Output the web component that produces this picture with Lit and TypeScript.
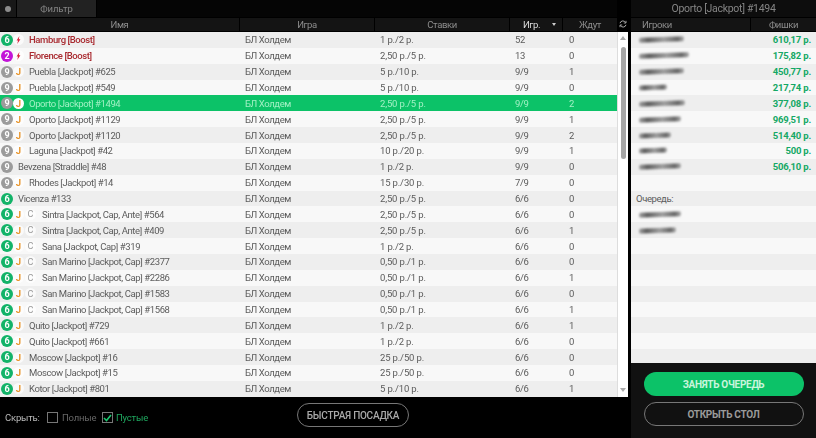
import { LitElement, html, css, svg } from "lit";
import { customElement } from "lit/decorators.js";
import { classMap } from "lit/directives/class-map.js";

type Row = { seats: string; tag: string; cap?: boolean; name: string; stakes: string; players: string; wait: string };
const rows: Row[] = [
  { seats: "6", tag: "b", name: "Hamburg [Boost]", stakes: "1 р./2 р.", players: "52", wait: "0" },
  { seats: "2", tag: "b", name: "Florence [Boost]", stakes: "2,50 р./5 р.", players: "13", wait: "0" },
  { seats: "9", tag: "J", name: "Puebla [Jackpot] #625", stakes: "5 р./10 р.", players: "9/9", wait: "1" },
  { seats: "9", tag: "J", name: "Puebla [Jackpot] #549", stakes: "5 р./10 р.", players: "9/9", wait: "0" },
  { seats: "9", tag: "J", name: "Oporto [Jackpot] #1494", stakes: "2,50 р./5 р.", players: "9/9", wait: "2" },
  { seats: "9", tag: "J", name: "Oporto [Jackpot] #1129", stakes: "2,50 р./5 р.", players: "9/9", wait: "1" },
  { seats: "9", tag: "J", name: "Oporto [Jackpot] #1120", stakes: "2,50 р./5 р.", players: "9/9", wait: "2" },
  { seats: "9", tag: "J", name: "Laguna [Jackpot] #42", stakes: "10 р./20 р.", players: "9/9", wait: "1" },
  { seats: "9", tag: "", name: "Bevzena [Straddle] #48", stakes: "1 р./2 р.", players: "9/9", wait: "0" },
  { seats: "9", tag: "J", name: "Rhodes [Jackpot] #14", stakes: "15 р./30 р.", players: "7/9", wait: "0" },
  { seats: "6", tag: "", name: "Vicenza #133", stakes: "2,50 р./5 р.", players: "6/6", wait: "0" },
  { seats: "6", tag: "J", cap: true, name: "Sintra [Jackpot, Cap, Ante] #564", stakes: "2,50 р./5 р.", players: "6/6", wait: "0" },
  { seats: "6", tag: "J", cap: true, name: "Sintra [Jackpot, Cap, Ante] #409", stakes: "2,50 р./5 р.", players: "6/6", wait: "1" },
  { seats: "6", tag: "J", cap: true, name: "Sana [Jackpot, Cap] #319", stakes: "1 р./2 р.", players: "6/6", wait: "0" },
  { seats: "6", tag: "J", cap: true, name: "San Marino [Jackpot, Cap] #2377", stakes: "0,50 р./1 р.", players: "6/6", wait: "0" },
  { seats: "6", tag: "J", cap: true, name: "San Marino [Jackpot, Cap] #2286", stakes: "0,50 р./1 р.", players: "6/6", wait: "1" },
  { seats: "6", tag: "J", cap: true, name: "San Marino [Jackpot, Cap] #1583", stakes: "0,50 р./1 р.", players: "6/6", wait: "0" },
  { seats: "6", tag: "J", cap: true, name: "San Marino [Jackpot, Cap] #1568", stakes: "0,50 р./1 р.", players: "6/6", wait: "1" },
  { seats: "6", tag: "J", name: "Quito [Jackpot] #729", stakes: "1 р./2 р.", players: "6/6", wait: "1" },
  { seats: "6", tag: "J", name: "Quito [Jackpot] #661", stakes: "1 р./2 р.", players: "6/6", wait: "0" },
  { seats: "6", tag: "J", name: "Moscow [Jackpot] #16", stakes: "25 р./50 р.", players: "6/6", wait: "0" },
  { seats: "6", tag: "J", name: "Moscow [Jackpot] #15", stakes: "25 р./50 р.", players: "6/6", wait: "0" },
  { seats: "6", tag: "J", name: "Kotor [Jackpot] #801", stakes: "5 р./10 р.", players: "6/6", wait: "1" },
];
const chips: [number, string][] = [
  [45, "610,17 р."], [50, "175,82 р."], [45, "450,77 р."], [28, "217,74 р."], [46, "377,08 р."],
  [42, "969,51 р."], [32, "514,40 р."], [28, "500 р."], [42, "506,10 р."],
];
const queue = [42, 37];
const bolt = svg`<svg class="bolt" viewBox="0 0 5 8" width="5" height="8"><path d="M3.4 0 .6 4.4h1.5L1.2 8l3.2-4.8H2.8z" fill="#d8203a"/></svg>`;

@customElement("app-root")
export class AppRoot extends LitElement {
  static styles = css`
    :host { display: block; width: 816px; height: 438px; background: #000; overflow: hidden; font-family: Roboto, "Noto Sans", sans-serif; font-size: 9.5px; color: #5c5c5c; letter-spacing: -.4px; }
    .page { display: grid; grid-template-columns: 617px 14px 185px; height: 438px; filter: blur(.25px); }
    .left { grid-column: 1; display: flex; flex-direction: column; min-width: 0; }
    .tabs { height: 17px; display: flex; background: #050505; }
    .dot-tab { width: 16px; display: flex; align-items: center; justify-content: center; background: #181818; }
    .dot { width: 6px; height: 6px; border-radius: 50%; background: #8c8c8c; }
    .tab { width: 81px; background: #222; color: #858585; display: flex; align-items: center; justify-content: center; box-sizing: border-box; border-right: 1px solid #000; border-left: 1px solid #000; letter-spacing: -.1px; }
    .head { height: 14px; margin-top: 1px; display: grid; background: #141414; color: #8d8d8d; grid-template-columns: 240px 135px 135px 53px 54px; box-sizing: border-box; border-bottom: 1px solid #000; align-items: center; }
    .head > div { text-align: center; border-right: 1px solid #000; line-height: 13px; position: relative; }
    .head > div:last-child { border-right: 0; }
    .head .sort { color: #ddd; padding-right: 9px; box-sizing: border-box; }
    .sort i { position: absolute; right: 6px; top: 5px; border: 2px solid transparent; border-top: 3px solid #ccc; border-bottom: 0; }
    .list { height: 365px; display: grid; grid-auto-rows: calc(365px / 23); }
    .row { display: grid; grid-template-columns: 240px 135px 135px 54px 53px; align-items: center; background: #f8f8f8; }
    .row:nth-child(odd) { background: #eeeeee; }
    .row.sel { background: #0cc268; color: #a2f0c4; }
    .row > div { white-space: nowrap; padding-left: 5px; }
    .row .c-name { padding-left: 1px; display: flex; align-items: center; }
    .row .c-stakes { letter-spacing: -.15px; }
    .seat { width: 12px; height: 12px; border-radius: 50%; color: #fff; font-size: 9px; font-weight: 700; display: flex; align-items: center; justify-content: center; letter-spacing: 0; flex: none; }
    .s6 { background: #12b368; }
    .s2 { background: #c314d8; }
    .s9 { background: #9b9b9b; }
    .ic { width: 11px; height: 11px; border-radius: 50%; display: flex; align-items: center; justify-content: center; font-size: 9.5px; font-weight: 700; color: #e8962e; flex: none; letter-spacing: 0; background: rgba(255, 255, 255, .7); }
    .ic.cap { color: #999; font-weight: 400; font-size: 9px; margin-left: 1px; }
    .sel .ic { background: #fff; }
    .nm { margin-left: 5px; }
    .nm.capped { margin-left: 6px; }
    .nm.boost { color: #a92a30; font-weight: 500; }
    .sel .nm { color: #a2f0c4; }
    .bottom { flex: 1; display: flex; align-items: center; position: relative; padding: 0 0 0 5px; color: #999; letter-spacing: -.2px; }
    .chk { width: 9px; height: 9px; border: 1px solid #777; margin-right: 4px; display: flex; align-items: center; justify-content: center; flex: none; }
    .hide { width: 42px; color: #bbb; }
    .full { width: 40px; color: #666; }
    .empty { color: #1fa85f; margin-left: -1px; }
    .quick { position: absolute; left: 297px; top: 6px; width: 112px; height: 24px; box-sizing: border-box; border: 1px solid #777; border-radius: 12px; color: #aaa; font-weight: 500; display: flex; align-items: center; justify-content: center; font-size: 10px; letter-spacing: -.25px; }
    .side { grid-column: 2; display: flex; flex-direction: column; }
    .refresh { height: 32px; display: flex; align-items: flex-end; justify-content: center; padding: 0 3px 4px 0; box-sizing: border-box; }
    .track { width: 11px; height: 365px; background: #fff; display: flex; flex-direction: column; align-items: center; position: relative; border-left: 1px solid #ddd; box-sizing: border-box; }
    .arrow { height: 12px; display: flex; align-items: center; justify-content: center; }
    .arrow i { border: 3px solid transparent; border-bottom: 4px solid #aaa; border-top: 0; }
    .arrow.down { position: absolute; bottom: 1px; }
    .arrow.down i { border-bottom: 0; border-top: 4px solid #aaa; }
    .thumb { width: 5px; height: 112px; border-radius: 3px; background: #a5a5a5; margin-top: 3px; }
    .right { grid-column: 3; display: flex; flex-direction: column; }
    .title { height: 17px; text-align: center; line-height: 18px; color: #858585; font-size: 10.5px; letter-spacing: -.3px; background: #0d0d0d; }
    .rhead { height: 14px; margin-top: 1px; display: grid; grid-template-columns: 120px 65px; background: #141414; color: #8d8d8d; align-items: center; box-sizing: border-box; border-bottom: 1px solid #000; }
    .rhead > div { line-height: 13px; }
    .rhead .pl { padding-left: 11px; border-right: 1px solid #000; }
    .rhead .ch { text-align: center; }
    .rlist { height: 331px; display: grid; grid-auto-rows: calc(365px / 23); background: #f8f8f8; overflow: hidden; }
    .pr { display: flex; align-items: center; justify-content: space-between; padding: 0 5px 0 8px; background: #f8f8f8; min-width: 0; }
    .pr:nth-child(odd) { background: #eeeeee; }
    .blur { height: 5px; border-radius: 2px; background: linear-gradient(90deg, #a0a0a0, #5e5e5e 20%, #a0a0a0 55%, #666 85%, #aaa); filter: blur(1.3px); transform: skewY(-2deg); }
    .amt { color: #14a865; font-weight: 700; letter-spacing: -.2px; }
    .q { padding-left: 5px; }
    .actions { flex: 1; display: flex; flex-direction: column; align-items: center; gap: 6px; padding-top: 9px; background: #111; }
    .btn { width: 160px; height: 24px; border-radius: 12px; box-sizing: border-box; display: flex; align-items: center; justify-content: center; font-weight: 700; font-size: 10px; letter-spacing: -.3px; }
    .btn.g { background: #0cc268; color: #c8f5dc; }
    .btn.o { border: 1px solid #777; color: #9a9a9a; }
  `;

  private rowTpl(r: Row, i: number) {
    return html`<div class=${classMap({ row: true, sel: i === 4 })}>
      <div class="c-name">
        <span class="seat s${r.seats}">${r.seats}</span>
        ${r.tag === "b" ? html`<span class="ic">${bolt}</span>` : r.tag === "J" ? html`<span class="ic">J</span>` : ""}
        ${r.cap ? html`<span class="ic cap">C</span>` : ""}
        <span class=${classMap({ nm: true, boost: r.tag === "b", capped: !!r.cap })}>${r.name}</span>
      </div>
      <div>БЛ Холдем</div><div class="c-stakes">${r.stakes}</div><div>${r.players}</div><div>${r.wait}</div>
    </div>`;
  }

  render() {
    const empties = Array.from({ length: 21 - chips.length - 1 - 1 - queue.length });
    return html`<div class="page">
      <div class="left">
        <div class="tabs"><div class="dot-tab"><span class="dot"></span></div><div class="tab">Фильтр</div></div>
        <div class="head"><div>Имя</div><div>Игра</div><div>Ставки</div><div class="sort">Игр.<i></i></div><div>Ждут</div></div>
        <div class="list">${rows.map((r, i) => this.rowTpl(r, i))}</div>
        <div class="bottom">
          <span class="hide">Скрыть:</span>
          <span class="chk"></span><span class="full">Полные</span>
          <span class="chk"><svg width="9" height="8" viewBox="0 0 9 8"><path d="M1 4l2.5 2.5L8 1" fill="none" stroke="#1cc870" stroke-width="1.6"/></svg></span><span class="empty">Пустые</span>
          <div class="quick">БЫСТРАЯ ПОСАДКА</div>
        </div>
      </div>
      <div class="side">
        <div class="refresh"><svg width="8" height="8" viewBox="0 0 8 8" fill="none" stroke="#aaa" stroke-width="1"><path d="M1 3.2A3 3 0 0 1 6.6 2.6M7 4.8A3 3 0 0 1 1.4 5.4"/><path d="M7 .8v2.2H4.8M1 7.2V5h2.2" stroke-width=".9"/></svg></div>
        <div class="track"><div class="arrow"><i></i></div><div class="thumb"></div><div class="arrow down"><i></i></div></div>
      </div>
      <div class="right">
        <div class="title">Oporto [Jackpot] #1494</div>
        <div class="rhead"><div class="pl">Игроки</div><div class="ch">Фишки</div></div>
        <div class="rlist">
          ${chips.map(([w, a]) => html`<div class="pr"><span class="blur" style="width:${w}px"></span><span class="amt">${a}</span></div>`)}
          <div class="pr"></div>
          <div class="pr q">Очередь:</div>
          ${queue.map((w) => html`<div class="pr"><span class="blur" style="width:${w}px"></span></div>`)}
          ${empties.map(() => html`<div class="pr"></div>`)}
        </div>
        <div class="actions"><div class="btn g">ЗАНЯТЬ ОЧЕРЕДЬ</div><div class="btn o">ОТКРЫТЬ СТОЛ</div></div>
      </div>
    </div>`;
  }
}
